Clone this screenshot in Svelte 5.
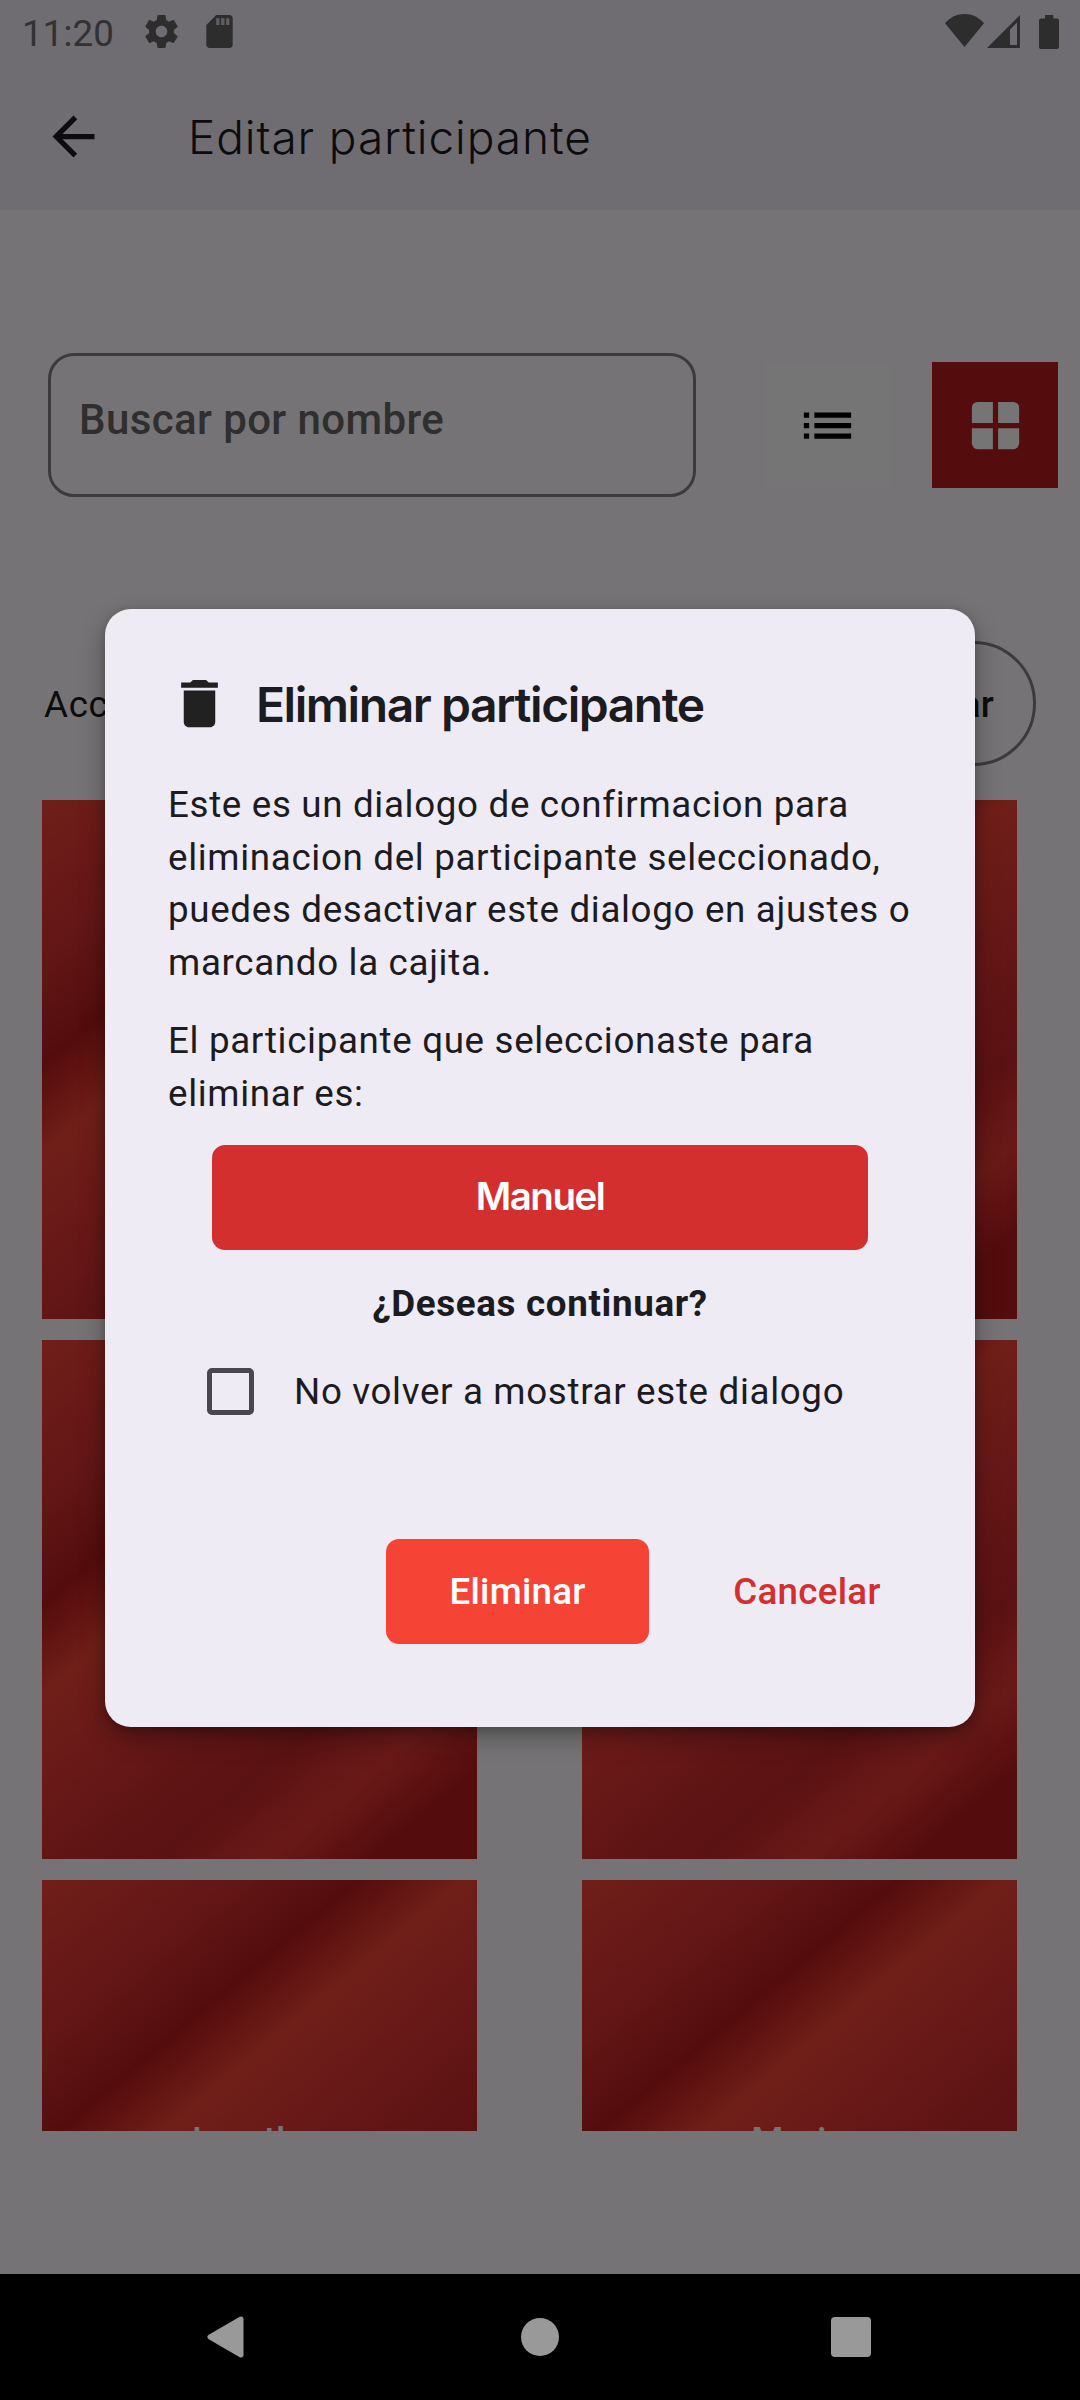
<script>
  const cards = ['', '', '', '', 'Jonathan', 'Mario'];
  let dontShowAgain = $state(false);
</script>

<div class="screen">
  <div class="app">
    <div class="status">
      <span class="time">11:20</span>
      <svg class="gear" viewBox="2 2 20 20"><path d="M19.43 12.98c.04-.32.07-.64.07-.98s-.03-.66-.07-.98l2.11-1.65c.19-.15.24-.42.12-.64l-2-3.46c-.12-.22-.39-.3-.61-.22l-2.49 1c-.52-.4-1.08-.73-1.69-.98l-.38-2.65C14.46 2.18 14.25 2 14 2h-4c-.25 0-.46.18-.49.42l-.38 2.65c-.61.25-1.17.59-1.69.98l-2.49-1c-.23-.09-.49 0-.61.22l-2 3.46c-.13.22-.07.49.12.64l2.11 1.65c-.04.32-.07.65-.07.98s.03.66.07.98l-2.11 1.65c-.19.15-.24.42-.12.64l2 3.46c.12.22.39.3.61.22l2.49-1c.52.4 1.08.73 1.69.98l.38 2.65c.03.24.24.42.49.42h4c.25 0 .46-.18.49-.42l.38-2.65c.61-.25 1.17-.59 1.69-.98l2.49 1c.23.09.49 0 .61-.22l2-3.46c.12-.22.07-.49-.12-.64l-2.11-1.65zM12 15.5c-1.93 0-3.5-1.57-3.5-3.5s1.57-3.5 3.5-3.5 3.5 1.57 3.5 3.5-1.57 3.5-3.5 3.5z" /></svg>
      <svg class="sd" viewBox="4 2 16 20"><path d="M18 2h-8L4.02 8 4 20c0 1.100.9 2 2 2h12c1.100 0 2-.9 2-2V4c0-1.100-.9-2-2-2z" /><path class="slots" d="M10 4h2v4h-2zM13 4h2v4h-2zM16 4h2v4h-2z" /></svg>
      <span class="grow"></span>
      <svg class="wifi" viewBox="0 0 39 33"><path d="M0 9.200C5.400 3.200 12 0 19.500 0S33.600 3.200 39 9.200L19.500 33z" /></svg>
      <svg class="signal" viewBox="0 0 33 33"><path fill-rule="evenodd" d="M33 0v33H0zM30 7.500l-7 7V30h7z" /></svg>
      <svg class="battery" viewBox="0 0 20 34"><path d="M6 0h8.300v3.400H18a2 2 0 0 1 2 2V32a2 2 0 0 1-2 2H2a2 2 0 0 1-2-2V5.400a2 2 0 0 1 2-2h4z" /></svg>
    </div>

    <header class="appbar">
      <svg class="icon" viewBox="0 0 24 24"><path d="M20 11H7.830l5.590-5.590L12 4l-8 8 8 8 1.410-1.410L7.830 13H20v-2z" /></svg>
      <h1>Editar participante</h1>
    </header>

    <div class="tools">
      <div class="search">Buscar por nombre</div>
      <button class="view list" aria-label="Lista">
        <svg class="icon" viewBox="0 0 24 24"><path d="M3 13h2v-2H3v2zm0 4h2v-2H3v2zm0-8h2V7H3v2zm4 4h14v-2H7v2zm0 4h14v-2H7v2zM7 7v2h14V7H7z" /></svg>
      </button>
      <button class="view tiles" aria-label="Cuadrícula">
        <svg class="icon" viewBox="0 0 24 24"><path d="M11 11H3V5.200A2.200 2.200 0 0 1 5.200 3H11zM13 11V3h5.800A2.200 2.200 0 0 1 21 5.200V11zM11 13v8H5.200A2.200 2.200 0 0 1 3 18.800V13zM13 13h8v5.800a2.200 2.200 0 0 1-2.200 2.200H13z" /></svg>
      </button>
    </div>

    <div class="actions">
      <span>Acciones</span>
      <div class="chip">Seleccionar</div>
    </div>

    <div class="cards">
      {#each cards as name}
        <div class="card">{name}</div>
      {/each}
    </div>

    <div class="scrim">
      <div class="dialog">
        <div class="heading">
          <svg class="icon" viewBox="0 0 24 24"><path d="M6 19c0 1.100.9 2 2 2h8c1.100 0 2-.9 2-2V7H6v12zM19 4h-3.500l-1-1h-5l-1 1H5v2h14V4z" /></svg>
          <h2>Eliminar participante</h2>
        </div>
        <p>Este es un dialogo de confirmacion para<br />eliminacion del participante seleccionado,<br />puedes desactivar este dialogo en ajustes o<br />marcando la cajita.</p>
        <p>El participante que seleccionaste para<br />eliminar es:</p>
        <div class="person">Manuel</div>
        <strong>¿Deseas continuar?</strong>
        <label>
          <input type="checkbox" bind:checked={dontShowAgain} />
          <span>No volver a mostrar este dialogo</span>
        </label>
        <div class="buttons">
          <button class="remove">Eliminar</button>
          <button class="cancel">Cancelar</button>
        </div>
      </div>
    </div>
  </div>

  <nav class="system">
    <svg viewBox="0 0 37 42"><path d="M34 3L3 21l31 18z" stroke-width="5" stroke-linejoin="round" /></svg>
    <span class="home"></span>
    <span class="recent"></span>
  </nav>
</div>

<style>
  :global(body) { background: #fffbff; }
  * { box-sizing: border-box; }
  .screen {
    width: 1080px;
    height: 2400px;
    overflow: hidden;
    font-family: Roboto, "Liberation Sans", sans-serif;
    font-size: 36.75px;
    line-height: 52.5px;
    letter-spacing: 0.66px;
    color: #1c1b1f;
  }
  .app { position: relative; height: 2274px; background: #fffbff; overflow: hidden; }
  svg { display: block; flex: none; fill: currentColor; }
  .icon { width: 63px; height: 63px; }
  h1, h2, p { margin: 0; }
  button { border: 0; padding: 0; font: inherit; letter-spacing: inherit; }

  .status {
    height: 63px;
    padding: 0 21px 0 22px;
    display: flex;
    align-items: center;
    background: #f1edf8;
    color: #626262;
  }
  .time { width: 123px; color: #6e6e6e; letter-spacing: 0.1px; line-height: 63px; padding-top: 3px; }
  .gear { width: 33px; height: 33px; }
  .sd { width: 27px; height: 33px; margin-left: 28px; }
  .slots { fill: #d0ccd6; }
  .grow { flex: 1; }
  .wifi { width: 39px; height: 33px; margin-top: -2px; }
  .signal { width: 33px; height: 33px; margin-left: 3px; }
  .battery { width: 20px; height: 34px; margin-left: 19px; }

  .appbar {
    height: 147px;
    padding: 0 42px;
    display: flex;
    align-items: center;
    gap: 83px;
    background: #f1edf8;
  }
  h1 {
    font-family: Inter, "Liberation Sans", sans-serif;
    font-weight: 300;
    font-size: 46px;
    letter-spacing: 0.9px;
    line-height: 60px;
  }

  .tools { margin-top: 143px; padding-left: 48px; display: flex; align-items: center; }
  .search {
    width: 648px;
    height: 144px;
    padding: 0 28px 10px;
    display: flex;
    align-items: center;
    border: 3px solid #827f85;
    border-radius: 26px;
    font-size: 42px;
    font-weight: 500;
    letter-spacing: 0.4px;
    color: #666;
  }
  .view { width: 126px; height: 126px; display: grid; place-items: center; }
  .list { margin-left: 68px; background: #fcfffc; color: #000; }
  .tiles { margin-left: 42px; background: #b71c1c; color: #fff; }

  .actions {
    height: 125px;
    margin-top: 144px;
    padding: 0 44px;
    display: flex;
    align-items: center;
    justify-content: space-between;
  }
  .actions span { padding-top: 3px; }
  .chip {
    height: 125px;
    padding: 3px 39px 0;
    display: flex;
    align-items: center;
    border: 3px solid #827f85;
    border-radius: 63px;
    font-weight: 500;
    letter-spacing: 0.26px;
  }

  .cards {
    height: 1331px;
    margin: 34px 63px 0 42px;
    overflow: hidden;
    display: grid;
    grid-template-columns: 435px 435px;
    grid-auto-rows: 519px;
    gap: 21px 105px;
  }
  .card {
    padding-top: 235px;
    text-align: center;
    color: #fff;
    font-weight: 500;
    letter-spacing: 0.26px;
    background: linear-gradient(
      140.03deg,
      #f44336 0%, #e53935 10%, #d32f2f 20%, #b71c1c 30%, #f44336 40%, #e53935 50%,
      #d32f2f 60%, #c62828 70%, #e53935 80%, #b71c1c 90%
    );
  }

  .scrim {
    position: absolute;
    inset: 0;
    padding-top: 609px;
    display: flex;
    align-items: flex-start;
    justify-content: center;
    background: rgba(0, 0, 0, 0.54);
  }
  .dialog {
    width: 870px;
    height: 1118px;
    padding: 63px 63px 0;
    display: flex;
    flex-direction: column;
    border-radius: 26px;
    background: #eeebf5;
    box-shadow: 0 10px 26px rgba(0, 0, 0, 0.28), 0 3px 10px rgba(0, 0, 0, 0.2);
  }
  .heading { display: flex; align-items: center; gap: 25px; margin-bottom: 44px; color: #212121; }
  h2 {
    padding-top: 2px;
    font-family: Inter, "Liberation Sans", sans-serif;
    font-weight: 600;
    font-size: 48px;
    line-height: 61px;
    letter-spacing: -1.450px;
    color: #1c1b1f;
    white-space: nowrap;
  }
  p { white-space: nowrap; margin-bottom: 26px; }
  .person {
    width: 656px;
    height: 105px;
    margin-top: -1px;
    align-self: center;
    border-radius: 13px;
    background: #d32f2f;
    color: #fff;
    font: 600 38.500px/103px Inter, "Liberation Sans", sans-serif;
    letter-spacing: -1.500px;
    text-align: center;
  }
  strong { align-self: center; margin-top: 28px; font-weight: 700; }
  label { margin: 29px 0 0 39px; height: 63px; display: flex; align-items: center; gap: 40px; }
  label span { padding-top: 3px; }
  input {
    appearance: none;
    width: 47px;
    height: 47px;
    margin: 0;
    border: 5px solid #494551;
    border-radius: 5px;
  }
  .buttons { display: flex; justify-content: flex-end; align-items: center; margin-top: 116px; }
  .buttons button { height: 105px; padding-top: 2px; font-weight: 500; letter-spacing: 0.26px; border-radius: 13px; }
  .remove { width: 263px; background: #f54336; color: #fff; }
  .cancel { width: 210px; margin-left: 53px; background: transparent; color: #d32f2f; }

  .system {
    height: 126px;
    padding: 0 209px 0 207px;
    display: flex;
    align-items: center;
    justify-content: space-between;
    background: #000;
    color: #999;
  }
  .system svg { width: 37px; height: 42px; stroke: #999; }
  .home { width: 38px; height: 38px; margin-left: 5px; border-radius: 50%; background: #999; }
  .recent { width: 40px; height: 40px; border-radius: 4px; background: #999; }
</style>
